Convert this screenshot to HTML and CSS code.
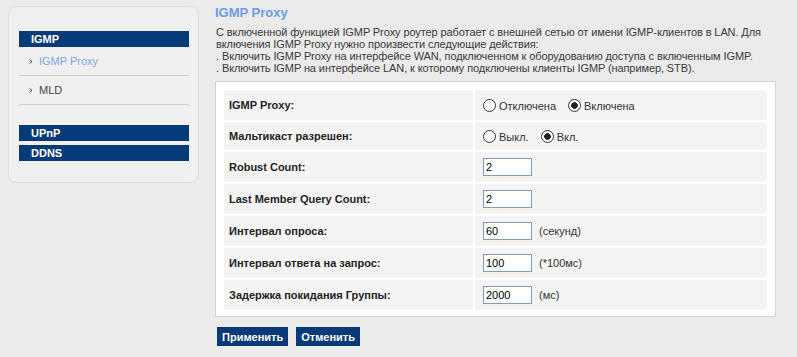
FILE: index.html
```html
<!DOCTYPE html>
<html>
<head>
<meta charset="utf-8">
<title>IGMP Proxy</title>
<link rel="stylesheet" href="styles.css">
</head>
<body>
<div class="page">

<div class="sidebar">
  <div class="nav-head">IGMP</div>
  <ul class="subnav">
    <li class="active"><svg class="arrow" width="4" height="5" viewBox="0 0 4 5"><path d="M0.5 0.5 L3 2.5 L0.5 4.5" fill="none" stroke="#444" stroke-width="1"/></svg>IGMP Proxy</li>
    <li><svg class="arrow" width="4" height="5" viewBox="0 0 4 5"><path d="M0.5 0.5 L3 2.5 L0.5 4.5" fill="none" stroke="#444" stroke-width="1"/></svg>MLD</li>
  </ul>
  <div class="nav-head spaced">UPnP</div>
  <div class="nav-head">DDNS</div>
</div>

<div class="main">
  <h1 class="title">IGMP Proxy</h1>
  <p class="intro">
    С включенной функцией IGMP Proxy роутер работает с внешней сетью от имени IGMP-клиентов в LAN. Для<br>
    включения IGMP Proxy нужно произвести следующие действия:<br>
    . Включить IGMP Proxy на интерфейсе WAN, подключенном к оборудованию доступа с включенным IGMP.<br>
    . Включить IGMP на интерфейсе LAN, к которому подключены клиенты IGMP (например, STB).
  </p>

  <div class="form-box">
    <div class="form-grid">
      <div class="cell label">IGMP Proxy:</div>
      <div class="cell value">
        <input type="radio" name="proxy" class="radio"><span class="opt">Отключена</span>
        <input type="radio" name="proxy" class="radio" checked><span class="opt">Включена</span>
      </div>

      <div class="cell label short">Мальтикаст разрешен:</div>
      <div class="cell value short">
        <input type="radio" name="mcast" class="radio"><span class="opt">Выкл.</span>
        <input type="radio" name="mcast" class="radio" checked><span class="opt">Вкл.</span>
      </div>

      <div class="cell label">Robust Count:</div>
      <div class="cell value"><input type="text" class="field" value="2"></div>

      <div class="cell label">Last Member Query Count:</div>
      <div class="cell value"><input type="text" class="field" value="2"></div>

      <div class="cell label">Интервал опроса:</div>
      <div class="cell value"><input type="text" class="field" value="60"><span class="unit">(секунд)</span></div>

      <div class="cell label">Интервал ответа на запрос:</div>
      <div class="cell value"><input type="text" class="field" value="100"><span class="unit">(*100мс)</span></div>

      <div class="cell label">Задержка покидания Группы:</div>
      <div class="cell value"><input type="text" class="field" value="2000"><span class="unit">(мс)</span></div>
    </div>
  </div>

  <div class="buttons">
    <button class="btn">Применить</button>
    <button class="btn">Отменить</button>
  </div>
</div>

</div>
</body>
</html>
```

FILE: styles.css
```css
body {
  margin: 0;
  background: #ebebeb;
  font-family: "Liberation Sans", Arial, sans-serif;
  font-size: 11px;
  color: #333;
}
.page {
  display: flex;
  align-items: flex-start;
}

/* left menu */
.sidebar {
  box-sizing: border-box;
  width: 191px;
  height: 177px;
  margin: 6px 0 0 8px;
  padding: 24px 9px 0 10px;
  background: #f0f0f0;
  border: 1px solid #dedede;
  border-radius: 9px;
}
.nav-head {
  height: 16px;
  line-height: 16px;
  padding-left: 12px;
  background: #063a78;
  color: #fff;
  font-weight: bold;
  font-size: 11px;
  margin-bottom: 4px;
}
.nav-head.spaced {
  margin-top: 20px;
}
.subnav {
  list-style: none;
  margin: -4px 0 0 0;
  padding: 0;
}
.subnav li {
  display: flex;
  align-items: center;
  height: 28px;
  padding-left: 10px;
  border-bottom: 1px solid #cfcfcf;
  color: #444;
}
.subnav li.active {
  color: #7aa7e6;
}
.arrow {
  margin-right: 6px;
}

/* content */
.main {
  margin-left: 16px;
  width: 561px;
}
.title {
  margin: 0;
  padding-top: 5px;
  font-size: 13px;
  line-height: 15px;
  color: #6d9de6;
}
.intro {
  margin: 6px 0 0 1px;
  color: #3a3a3a;
  letter-spacing: -0.1px;
}
.form-box {
  margin-top: 7px;
  padding: 8px 8px 6px 8px;
  background: #fff;
  border: 1px solid #d4d4d4;
}
.form-grid {
  display: grid;
  grid-template-columns: 249px 1fr;
  gap: 2px;
}
.cell {
  display: flex;
  align-items: center;
  height: 30px;
  background: #f4f4f4;
}
.cell.short {
  height: 28px;
}
.label {
  padding-left: 5px;
  font-weight: bold;
  color: #222;
}
.value {
  padding-left: 8px;
}
.radio {
  -webkit-appearance: none;
  appearance: none;
  box-sizing: border-box;
  width: 13px;
  height: 13px;
  margin: 0 3px 0 0;
  border: 1px solid #333;
  border-radius: 50%;
  background: #fff;
}
.radio:checked {
  background: radial-gradient(circle, #222 0 3px, #fff 3.6px);
}
.opt {
  padding-top: 2px;
  margin-right: 12px;
  color: #333;
}
.field {
  box-sizing: border-box;
  width: 49px;
  height: 18px;
  margin: 0;
  padding: 0 2px;
  border: 1px solid #7f9db9;
  font-family: "Liberation Sans", Arial, sans-serif;
  font-size: 11px;
  color: #000;
  background: #fff;
}
.unit {
  margin-left: 7px;
  color: #333;
}
.buttons {
  display: flex;
  gap: 8px;
  margin: 10px 0 0 2px;
}
.btn {
  height: 19px;
  padding: 0 5px;
  border: 0;
  background: #063a78;
  color: #fff;
  font-family: "Liberation Sans", Arial, sans-serif;
  font-size: 11px;
  font-weight: bold;
}
```
